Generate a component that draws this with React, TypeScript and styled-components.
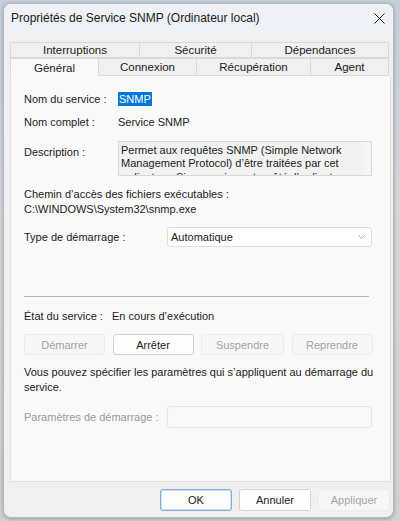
import React from "react";
import styled, { createGlobalStyle } from "styled-components";

const GlobalStyle = createGlobalStyle`
  html, body {
    margin: 0;
    padding: 0;
    background: #d4d9df;
    font-family: "Liberation Sans", Arial, sans-serif;
    font-size: 11px;
    color: #1b1b1b;
  }
`;

const Desktop = styled.div`
  width: 400px;
  height: 521px;
  padding: 3px 6px 3px 3px;
  box-sizing: border-box;
  background: linear-gradient(180deg, #c6d0da 0%, #d6d9dd 40%, #d2d2d2 100%);
`;

const Window = styled.div`
  width: 391px;
  height: 515px;
  box-sizing: border-box;
  border: 1px solid #b9b9b9;
  border-radius: 8px;
  background: #f0f0f0;
  box-shadow: 0 1px 4px rgba(0, 0, 0, 0.25);
  overflow: hidden;
  display: flex;
  flex-direction: column;
`;

const TitleBar = styled.div`
  height: 29px;
  display: flex;
  align-items: center;
  justify-content: space-between;
  padding: 0 8px 0 7px;
  background: #eef1f5;
`;

const Title = styled.span`
  font-size: 12px;
  color: #1a1a1a;
`;

const Body = styled.div`
  flex: 1;
  display: flex;
  flex-direction: column;
  padding: 10px 2px 6px 6px;
`;

const TabRow = styled.div`
  display: flex;
  height: 16px;
`;

const Tab = styled.div<{ $w: number; $active?: boolean }>`
  width: ${(p) => p.$w}px;
  box-sizing: border-box;
  display: flex;
  align-items: center;
  justify-content: center;
  background: ${(p) => (p.$active ? "#f9f9f9" : "#f0f0f0")};
  border: 1px solid #dadada;
  border-bottom: ${(p) => (p.$active ? "none" : "1px solid #dadada")};
  border-left: none;
  font-size: 11.5px;
  color: #1b1b1b;
  &:first-child {
    border-left: 1px solid #dadada;
  }
`;

const LowerTabs = styled(TabRow)`
  height: 18px;
`;

const Panel = styled.div`
  height: 406px;
  box-sizing: border-box;
  background: #f9f9f9;
  border: 1px solid #e2e2e2;
  border-top: none;
  padding: 15px 18px 0 13px;
  display: flex;
  flex-direction: column;
`;

const Row = styled.div<{ $labelW?: number; $mt?: number }>`
  display: grid;
  grid-template-columns: ${(p) => p.$labelW ?? 94}px 1fr;
  align-items: start;
  margin-top: ${(p) => p.$mt ?? 0}px;
`;

const Label = styled.div<{ $pt?: number; $muted?: boolean }>`
  line-height: 16px;
  white-space: nowrap;
  padding-top: ${(p) => p.$pt ?? 0}px;
  color: ${(p) => (p.$muted ? "#9a9a9a" : "#1b1b1b")};
`;

const Value = styled.div`
  line-height: 16px;
`;

const Selected = styled.span`
  background: #0078d7;
  color: #ffffff;
  padding: 1px 1px;
`;

const DescBox = styled.div`
  height: 35px;
  box-sizing: border-box;
  border: 1px solid #d9d9d9;
  background: #f2f2f2;
  display: flex;
  overflow: hidden;
`;

const DescText = styled.div`
  flex: 1;
  padding: 1.5px 0 0 2px;
  line-height: 13.5px;
  white-space: nowrap;
`;

const ScrollTrack = styled.div`
  width: 17px;
  background: #f6f6f6;
`;

const Block = styled.div<{ $mt?: number }>`
  margin-top: ${(p) => p.$mt ?? 0}px;
  line-height: 15px;
  white-space: nowrap;
`;

const Dropdown = styled.div`
  height: 20px;
  box-sizing: border-box;
  border: 1px solid #dedede;
  border-radius: 3px;
  background: #ffffff;
  display: flex;
  align-items: center;
  justify-content: space-between;
  padding: 0 6px 0 3px;
`;

const Field = styled.div`
  height: 22px;
  box-sizing: border-box;
  border: 1px solid #e6e6e6;
  border-radius: 3px;
  background: #f9f9f9;
`;

const Separator = styled.div`
  margin-top: 49px;
  height: 1px;
  background: #b8b8b8;
  margin-right: 3px;
`;

const ButtonRow = styled.div`
  display: grid;
  grid-template-columns: 81px 81px 83px 81px;
  column-gap: 7.5px;
  margin-top: 10px;
`;

const Button = styled.div<{ $disabled?: boolean; $primary?: boolean }>`
  height: 21px;
  box-sizing: border-box;
  display: flex;
  align-items: center;
  justify-content: center;
  border-radius: 3px;
  border: 1px solid
    ${(p) => (p.$primary ? "#7eaee0" : p.$disabled ? "#ececec" : "#d2d2d2")};
  background: ${(p) => (p.$disabled ? "#f7f7f7" : "#fdfdfd")};
  color: ${(p) => (p.$disabled ? "#a3a3a3" : "#1b1b1b")};
  font-size: 11px;
  ${(p) => (p.$primary ? "box-shadow: inset 0 0 0 0.5px #9cc2ea;" : "")}
`;

const Footer = styled.div`
  display: flex;
  justify-content: flex-end;
  gap: 7px;
  margin-top: 7px;
  padding-right: 1px;
`;

const FooterButton = styled(Button)`
  width: 72px;
  height: 22px;
`;

const Chevron = () => (
  <svg width="7" height="4" viewBox="0 0 7 4">
    <polyline points="0.5,0.5 3.5,3.5 6.5,0.5" fill="none" stroke="#9a9a9a" strokeWidth="0.9" />
  </svg>
);

const CloseIcon = () => (
  <svg width="11" height="11" viewBox="0 0 11 11">
    <line x1="0.5" y1="0.5" x2="10.5" y2="10.5" stroke="#1a1a1a" strokeWidth="1" />
    <line x1="10.5" y1="0.5" x2="0.5" y2="10.5" stroke="#1a1a1a" strokeWidth="1" />
  </svg>
);

export default function App() {
  return (
    <Desktop>
      <GlobalStyle />
      <Window>
        <TitleBar>
          <Title>Propriétés de Service SNMP (Ordinateur local)</Title>
          <CloseIcon />
        </TitleBar>
        <Body>
          <TabRow>
            <Tab $w={130}>Interruptions</Tab>
            <Tab $w={112}>Sécurité</Tab>
            <Tab $w={137}>Dépendances</Tab>
          </TabRow>
          <LowerTabs>
            <Tab $w={89} $active>
              Général
            </Tab>
            <Tab $w={98}>Connexion</Tab>
            <Tab $w={114}>Récupération</Tab>
            <Tab $w={78}>Agent</Tab>
          </LowerTabs>
          <Panel>
            <Row>
              <Label>Nom du service :</Label>
              <Value>
                <Selected>SNMP</Selected>
              </Value>
            </Row>
            <Row $mt={7}>
              <Label>Nom complet :</Label>
              <Value>Service SNMP</Value>
            </Row>
            <Row $mt={11}>
              <Label $pt={3}>Description :</Label>
              <DescBox>
                <DescText>
                  Permet aux requêtes SNMP (Simple Network
                  <br />
                  Management Protocol) d’être traitées par cet
                  <br />
                  ordinateur. Si ce service est arrêté, l’ordinateur ne
                </DescText>
                <ScrollTrack />
              </DescBox>
            </Row>
            <Block $mt={11}>
              Chemin d’accès des fichiers exécutables :
              <br />
              C:\WINDOWS\System32\snmp.exe
            </Block>
            <Row $labelW={143} $mt={10}>
              <Label $pt={2}>Type de démarrage :</Label>
              <Dropdown>
                Automatique
                <Chevron />
              </Dropdown>
            </Row>
            <Separator />
            <Row $labelW={88} $mt={11}>
              <Label>État du service :</Label>
              <Value>En cours d’exécution</Value>
            </Row>
            <ButtonRow>
              <Button $disabled>Démarrer</Button>
              <Button>Arrêter</Button>
              <Button $disabled>Suspendre</Button>
              <Button $disabled>Reprendre</Button>
            </ButtonRow>
            <Block $mt={10}>
              Vous pouvez spécifier les paramètres qui s’appliquent au démarrage du
              <br />
              service.
            </Block>
            <Row $labelW={143} $mt={11}>
              <Label $muted $pt={3}>
                Paramètres de démarrage :
              </Label>
              <Field />
            </Row>
          </Panel>
          <Footer>
            <FooterButton $primary>OK</FooterButton>
            <FooterButton>Annuler</FooterButton>
            <FooterButton $disabled>Appliquer</FooterButton>
          </Footer>
        </Body>
      </Window>
    </Desktop>
  );
}
